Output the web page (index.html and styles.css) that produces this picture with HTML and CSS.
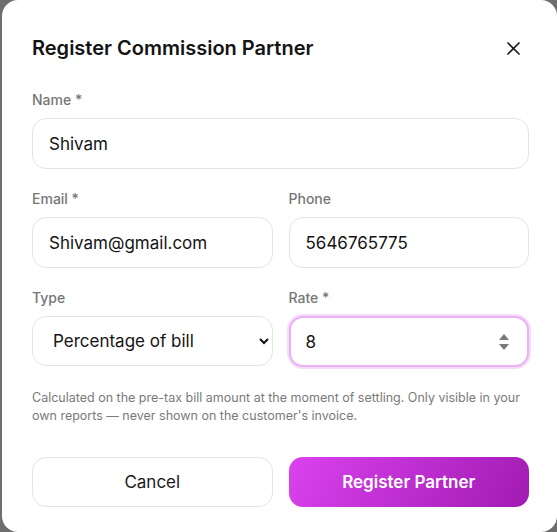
FILE: index.html
```html
<!DOCTYPE html>
<html lang="en">
<head>
	<meta charset="UTF-8">
	<title>Register Commission Partner</title>
<link rel="stylesheet" href="styles.css">
</head>
<body>
<div class="modal">
	<div class="modal-head">
		<h2 class="modal-title">Register Commission Partner</h2>
		<button class="close-btn" type="button">
			<svg width="13" height="13" viewBox="0 0 13 13"><path d="M1 1L12 12M12 1L1 12" stroke="#1a1a1a" stroke-width="1.7" stroke-linecap="round"/></svg>
		</button>
	</div>
	<form class="partner-form">
		<div class="field">
			<label class="field-label">Name *</label>
			<input class="field-input" type="text" value="Shivam">
		</div>
		<div class="field-row">
			<div class="field">
				<label class="field-label">Email *</label>
				<input class="field-input" type="text" value="Shivam@gmail.com">
			</div>
			<div class="field">
				<label class="field-label">Phone</label>
				<input class="field-input" type="text" value="5646765775">
			</div>
		</div>
		<div class="field-row">
			<div class="field">
				<label class="field-label">Type</label>
				<select class="field-input field-select">
					<option>Percentage of bill</option>
					<option>Fixed amount</option>
				</select>
			</div>
			<div class="field">
				<label class="field-label">Rate *</label>
				<div class="field-input rate-box">
					<input class="rate-input" type="text" value="8">
					<svg class="spin" width="12" height="20" viewBox="0 0 12 20"><path d="M6 2L11 8H1Z M6 18L11 12H1Z" fill="#7a7a7a"/></svg>
				</div>
			</div>
		</div>
		<p class="field-hint">Calculated on the pre-tax bill amount at the moment of settling. Only visible in your own reports — never shown on the customer's invoice.</p>
		<div class="form-actions">
			<button class="btn btn-cancel" type="button">Cancel</button>
			<button class="btn btn-primary" type="button">Register Partner</button>
		</div>
	</form>
</div>
</body>
</html>
```

FILE: styles.css
```css
*{padding:0;margin:0;box-sizing:border-box;}
body{
	background:#6e6e6e;
	font-family:Inter,"Liberation Sans",sans-serif;
	overflow:hidden;
}
/*弹窗*/
.modal{
	margin-left:2px;
	height:532px;
	background:#fff;
	border-radius:16px;
	padding:32px 28px 0 30px;
}
.modal-head{
	display:flex;
	align-items:center;
	justify-content:space-between;
}
.modal-title{
	font-size:20px;
	line-height:28px;
	font-weight:600;
	color:#141414;
}
.close-btn{
	width:32px;
	height:32px;
	border:none;
	background:none;
	display:flex;
	align-items:center;
	justify-content:center;
}
/*表单*/
.partner-form{
	margin-top:26px;
	display:flex;
	flex-direction:column;
	gap:20px;
}
.field{
	display:flex;
	flex-direction:column;
	gap:8px;
	min-width:0;
}
.field-row{
	display:grid;
	grid-template-columns:minmax(0,1fr) minmax(0,1fr);
	gap:16px;
}
.field-label{
	font-size:14px;
	line-height:20px;
	font-weight:500;
	color:#767676;
}
.field-input{
	width:100%;
	height:51px;
	border:1px solid #e4e4e4;
	border-radius:14px;
	padding:0 16px;
	font-family:inherit;
	font-size:17px;
	color:#141414;
	background:#fff;
	outline:none;
}
.field-select{
	height:50px;
	padding:0 12px 0 16px;
}
/*比例输入框 当前聚焦*/
.rate-box{
	display:flex;
	align-items:center;
	height:51px;
	border:2px solid #ebb0f5;
	box-shadow:0 0 0 2px #f6dbfa;
	padding:0 17px 0 15px;
}
.rate-input{
	flex:1;
	min-width:0;
	border:none;
	outline:none;
	font-family:inherit;
	font-size:17px;
	color:#141414;
	background:none;
}
.field-hint{
	margin-top:2px;
	font-size:12.5px;
	line-height:18px;
	color:#7a7a7a;
}
/*按钮*/
.form-actions{
	margin-top:12px;
	display:grid;
	grid-template-columns:minmax(0,1fr) minmax(0,1fr);
	gap:16px;
}
.btn{
	height:50px;
	border-radius:14px;
	font-family:inherit;
	font-size:17px;
}
.btn-cancel{
	background:#fff;
	border:1px solid #e4e4e4;
	color:#1a1a1a;
	font-weight:400;
}
.btn-primary{
	border:none;
	background:linear-gradient(120deg,#da42ee,#a11bb2);
	color:#fff;
	font-weight:600;
}
```
